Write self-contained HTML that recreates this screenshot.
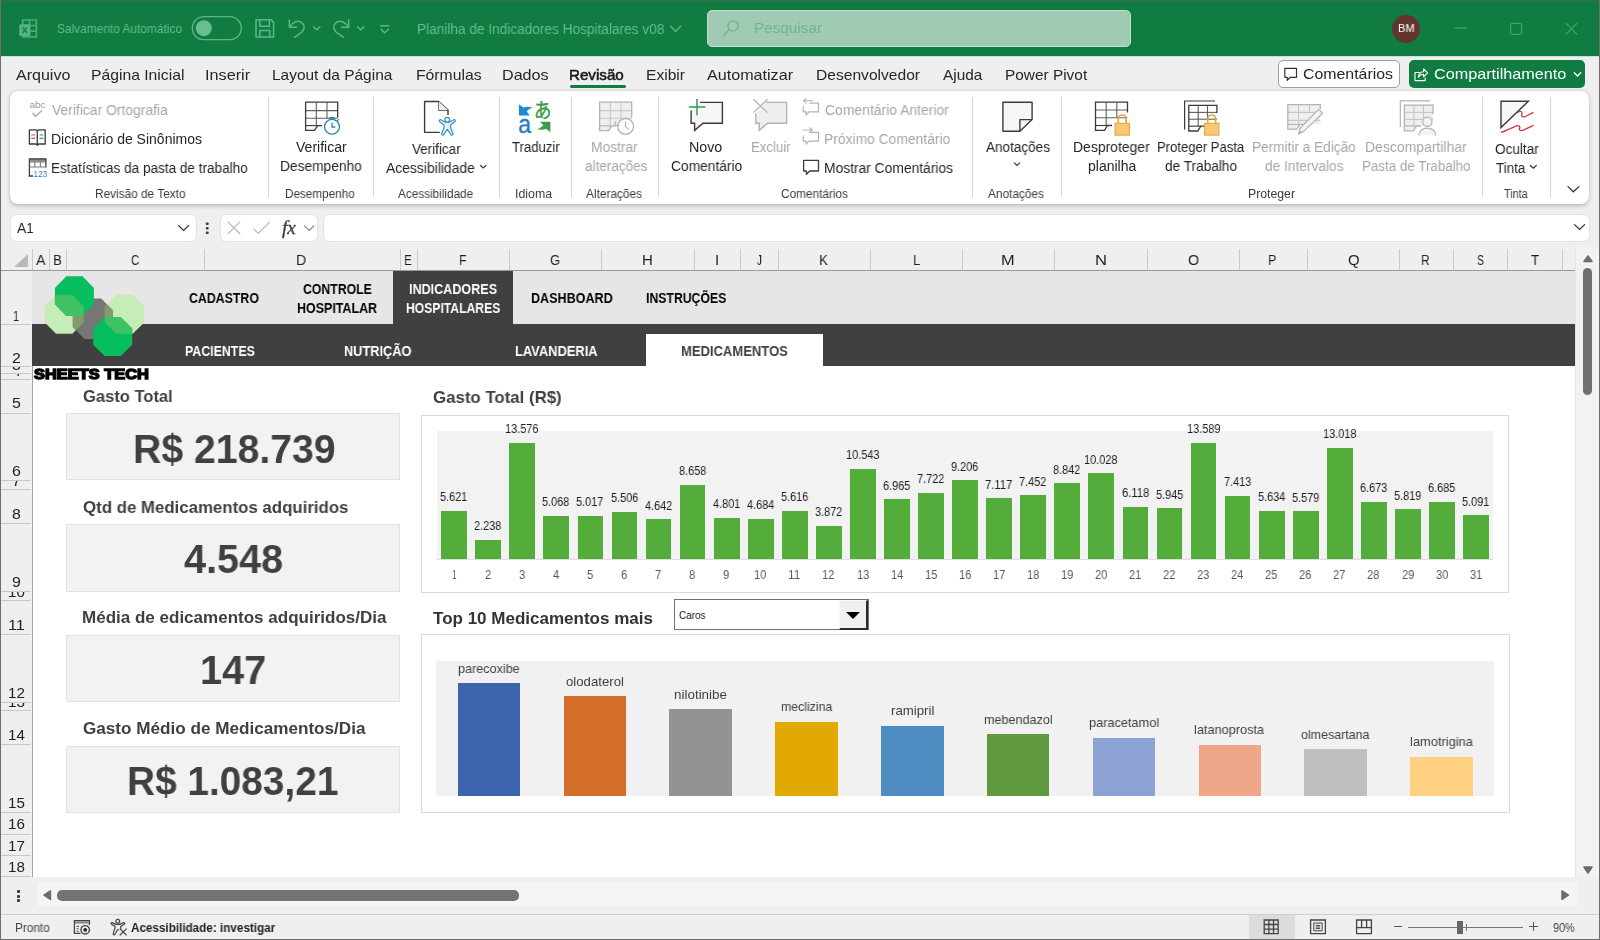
<!DOCTYPE html>
<html lang="pt-BR"><head><meta charset="utf-8"><title>Planilha de Indicadores Hospitalares v08</title>
<style>
html,body{margin:0;padding:0;}
body{width:1600px;height:940px;overflow:hidden;position:relative;background:#efefef;font-family:'Liberation Sans', 'DejaVu Sans', sans-serif;}
#app{position:absolute;left:0;top:0;width:1600px;height:940px;overflow:hidden;}
#app div{position:absolute;box-sizing:border-box;}
#app svg{position:absolute;overflow:visible;}
.t{position:absolute;white-space:nowrap;transform-origin:0 50%;display:block;will-change:transform;}
</style></head><body><div id="app">
<div style="left:0px;top:0px;width:1600px;height:56px;background:#107c41;"></div>
<div style="left:0px;top:0px;width:1600px;height:1px;background:#3b6b52;"></div>
<div style="left:707px;top:10px;width:424px;height:37px;background:#9fcbb4;border-radius:5px;border:1px solid #c0e2d0;"></div>
<div style="left:1391.5px;top:14.5px;width:28px;height:28px;background:#63352f;border-radius:50%;"></div>
<div style="left:0px;top:56px;width:1600px;height:36px;background:#efefef;"></div>
<div style="left:0px;top:55.5px;width:1600px;height:1.5px;background:#bfe6d0;"></div>
<div style="left:570px;top:85px;width:55.5px;height:3px;background:#107c41;border-radius:2px;"></div>
<div style="left:1278px;top:60px;width:122px;height:28px;background:#ffffff;border:1px solid #9e9e9e;border-radius:5px;"></div>
<div style="left:1409px;top:60px;width:176px;height:28px;background:#107c41;border-radius:5px;"></div>
<div style="left:10px;top:91px;width:1579px;height:113px;background:#ffffff;border-radius:8px;box-shadow:0 1.5px 4px rgba(0,0,0,.22),0 0 1px rgba(0,0,0,.15);"></div>
<div style="left:268.0px;top:97px;width:1px;height:100px;background:#d6d6d6;"></div>
<div style="left:373.0px;top:97px;width:1px;height:100px;background:#d6d6d6;"></div>
<div style="left:498.5px;top:97px;width:1px;height:100px;background:#d6d6d6;"></div>
<div style="left:570.5px;top:97px;width:1px;height:100px;background:#d6d6d6;"></div>
<div style="left:657.5px;top:97px;width:1px;height:100px;background:#d6d6d6;"></div>
<div style="left:972.0px;top:97px;width:1px;height:100px;background:#d6d6d6;"></div>
<div style="left:1060.5px;top:97px;width:1px;height:100px;background:#d6d6d6;"></div>
<div style="left:1482.0px;top:97px;width:1px;height:100px;background:#d6d6d6;"></div>
<div style="left:1550.0px;top:97px;width:1px;height:100px;background:#d6d6d6;"></div>
<div style="left:11px;top:215px;width:184.5px;height:25.5px;background:#ffffff;border-radius:5px;box-shadow:0 0 0 1px #e2e2e2;"></div>
<div style="left:220.5px;top:215px;width:96.5px;height:25.5px;background:#ffffff;border-radius:5px;box-shadow:0 0 0 1px #e2e2e2;"></div>
<div style="left:324px;top:215px;width:1264.5px;height:25.5px;background:#ffffff;border-radius:5px;box-shadow:0 0 0 1px #e2e2e2;"></div>
<div style="left:0px;top:247px;width:1575px;height:24px;background:#efefef;"></div>
<div style="left:0px;top:270px;width:1575px;height:1px;background:#9a9a9a;"></div>
<div style="left:49.0px;top:249px;width:1px;height:21px;background:#c9c9c9;"></div>
<div style="left:66.0px;top:249px;width:1px;height:21px;background:#c9c9c9;"></div>
<div style="left:203.5px;top:249px;width:1px;height:21px;background:#c9c9c9;"></div>
<div style="left:399.5px;top:249px;width:1px;height:21px;background:#c9c9c9;"></div>
<div style="left:416.5px;top:249px;width:1px;height:21px;background:#c9c9c9;"></div>
<div style="left:508.5px;top:249px;width:1px;height:21px;background:#c9c9c9;"></div>
<div style="left:600.5px;top:249px;width:1px;height:21px;background:#c9c9c9;"></div>
<div style="left:693.5px;top:249px;width:1px;height:21px;background:#c9c9c9;"></div>
<div style="left:739.5px;top:249px;width:1px;height:21px;background:#c9c9c9;"></div>
<div style="left:777.5px;top:249px;width:1px;height:21px;background:#c9c9c9;"></div>
<div style="left:870.0px;top:249px;width:1px;height:21px;background:#c9c9c9;"></div>
<div style="left:962.0px;top:249px;width:1px;height:21px;background:#c9c9c9;"></div>
<div style="left:1054.0px;top:249px;width:1px;height:21px;background:#c9c9c9;"></div>
<div style="left:1146.5px;top:249px;width:1px;height:21px;background:#c9c9c9;"></div>
<div style="left:1238.5px;top:249px;width:1px;height:21px;background:#c9c9c9;"></div>
<div style="left:1306.5px;top:249px;width:1px;height:21px;background:#c9c9c9;"></div>
<div style="left:1398.5px;top:249px;width:1px;height:21px;background:#c9c9c9;"></div>
<div style="left:1452.5px;top:249px;width:1px;height:21px;background:#c9c9c9;"></div>
<div style="left:1507.0px;top:249px;width:1px;height:21px;background:#c9c9c9;"></div>
<div style="left:1561.5px;top:249px;width:1px;height:21px;background:#c9c9c9;"></div>
<div style="left:31.5px;top:249px;width:1px;height:21px;background:#c9c9c9;"></div>
<svg style="left:14px;top:254px" width="15" height="14"><polygon points="14,0 14,13 0,13" fill="#b8b8b8"/></svg>
<div style="left:0px;top:271px;width:1575px;height:606px;background:#ffffff;"></div>
<div style="left:0px;top:271px;width:32px;height:606px;background:#efefef;"></div>
<div style="left:31.5px;top:271px;width:1px;height:606px;background:#a6a6a6;"></div>
<div style="left:0;top:271px;width:31px;height:606px;overflow:hidden;" id="rh">
<div style="left:0px;top:53.0px;width:31px;height:1px;background:#c9c9c9;"></div>
<div style="left:0px;top:94.5px;width:31px;height:1px;background:#c9c9c9;"></div>
<div style="left:0px;top:101.5px;width:31px;height:1px;background:#c9c9c9;"></div>
<div style="left:0px;top:108.0px;width:31px;height:1px;background:#c9c9c9;"></div>
<div style="left:0px;top:141.5px;width:31px;height:1px;background:#c9c9c9;"></div>
<div style="left:0px;top:209.0px;width:31px;height:1px;background:#c9c9c9;"></div>
<div style="left:0px;top:218.0px;width:31px;height:1px;background:#c9c9c9;"></div>
<div style="left:0px;top:251.5px;width:31px;height:1px;background:#c9c9c9;"></div>
<div style="left:0px;top:319.5px;width:31px;height:1px;background:#c9c9c9;"></div>
<div style="left:0px;top:328.5px;width:31px;height:1px;background:#c9c9c9;"></div>
<div style="left:0px;top:362.5px;width:31px;height:1px;background:#c9c9c9;"></div>
<div style="left:0px;top:430.5px;width:31px;height:1px;background:#c9c9c9;"></div>
<div style="left:0px;top:439.0px;width:31px;height:1px;background:#c9c9c9;"></div>
<div style="left:0px;top:473.0px;width:31px;height:1px;background:#c9c9c9;"></div>
<div style="left:0px;top:541.0px;width:31px;height:1px;background:#c9c9c9;"></div>
<div style="left:0px;top:562.5px;width:31px;height:1px;background:#c9c9c9;"></div>
<div style="left:0px;top:583.5px;width:31px;height:1px;background:#c9c9c9;"></div>
<div style="left:0px;top:604.5px;width:31px;height:1px;background:#c9c9c9;"></div>
</div>
<div style="left:32px;top:271px;width:1543px;height:53px;background:#e6e6e6;"></div>
<div style="left:32px;top:324.3px;width:1543px;height:41.5px;background:#404040;"></div>
<div style="left:393px;top:271px;width:120px;height:53.5px;background:#404040;"></div>
<div style="left:646px;top:334px;width:176.5px;height:31.8px;background:#ffffff;"></div>
<svg style="left:0;top:0" width="200" height="400"><defs><clipPath id="cg"><polygon points="84.6,298.6 101.2,298.6 113.0,310.4 113.0,327.1 101.2,338.9 84.6,338.9 72.8,327.1 72.8,310.4"/></clipPath><clipPath id="ct"><polygon points="66.3,276.3 82.5,276.3 93.9,287.9 93.9,304.3 82.5,315.9 66.3,315.9 54.9,304.3 54.9,287.9"/></clipPath><clipPath id="cb"><polygon points="104.6,317.2 120.8,317.2 132.2,328.6 132.2,344.7 120.8,356.1 104.6,356.1 93.2,344.7 93.2,328.6"/></clipPath></defs><polygon points="56.1,294.8 72.3,294.8 83.7,306.2 83.7,322.4 72.3,333.8 56.1,333.8 44.7,322.4 44.7,306.2" fill="#c6edb7"/><polygon points="116.3,294.8 132.7,294.8 144.3,306.2 144.3,322.4 132.7,333.8 116.3,333.8 104.7,322.4 104.7,306.2" fill="#c6edb7"/><polygon points="84.6,298.6 101.2,298.6 113.0,310.4 113.0,327.1 101.2,338.9 84.6,338.9 72.8,327.1 72.8,310.4" fill="#767676"/><g clip-path="url(#cg)"><polygon points="56.1,294.8 72.3,294.8 83.7,306.2 83.7,322.4 72.3,333.8 56.1,333.8 44.7,322.4 44.7,306.2" fill="#809b6d"/><polygon points="116.3,294.8 132.7,294.8 144.3,306.2 144.3,322.4 132.7,333.8 116.3,333.8 104.7,322.4 104.7,306.2" fill="#809b6d"/></g><polygon points="66.3,276.3 82.5,276.3 93.9,287.9 93.9,304.3 82.5,315.9 66.3,315.9 54.9,304.3 54.9,287.9" fill="#06bd60"/><polygon points="104.6,317.2 120.8,317.2 132.2,328.6 132.2,344.7 120.8,356.1 104.6,356.1 93.2,344.7 93.2,328.6" fill="#06bd60"/><g clip-path="url(#ct)"><polygon points="56.1,294.8 72.3,294.8 83.7,306.2 83.7,322.4 72.3,333.8 56.1,333.8 44.7,322.4 44.7,306.2" fill="#3fc263"/></g><g clip-path="url(#cb)"><polygon points="116.3,294.8 132.7,294.8 144.3,306.2 144.3,322.4 132.7,333.8 116.3,333.8 104.7,322.4 104.7,306.2" fill="#3fc263"/></g></svg>
<div style="left:66px;top:413.3px;width:334px;height:67.19999999999999px;background:#f2f2f2;border:1px solid #e2e2e2;"></div>
<div style="left:66px;top:524px;width:334px;height:67.5px;background:#f2f2f2;border:1px solid #e2e2e2;"></div>
<div style="left:66px;top:634.5px;width:334px;height:67.5px;background:#f2f2f2;border:1px solid #e2e2e2;"></div>
<div style="left:66px;top:745.5px;width:334px;height:67.0px;background:#f2f2f2;border:1px solid #e2e2e2;"></div>
<div style="left:421px;top:415px;width:1087.5px;height:177.5px;background:#ffffff;border:1px solid #d9d9d9;"></div>
<div style="left:437px;top:430.5px;width:1056px;height:128px;background:#f2f2f2;"></div>
<div style="left:437px;top:558.5px;width:1056px;height:1px;background:#dcdcdc;"></div>
<div style="left:441.25px;top:510.75px;width:25.75px;height:48.0px;background:#54ad3b;"></div>
<div style="left:475.25px;top:539.75px;width:25.75px;height:19.0px;background:#54ad3b;"></div>
<div style="left:509.25px;top:443.0px;width:25.75px;height:115.75px;background:#54ad3b;"></div>
<div style="left:543.25px;top:515.5px;width:25.75px;height:43.25px;background:#54ad3b;"></div>
<div style="left:577.5px;top:516.0px;width:25.75px;height:42.75px;background:#54ad3b;"></div>
<div style="left:611.5px;top:511.75px;width:25.75px;height:47.0px;background:#54ad3b;"></div>
<div style="left:645.5px;top:519.25px;width:25.75px;height:39.5px;background:#54ad3b;"></div>
<div style="left:679.5px;top:484.75px;width:25.75px;height:74.0px;background:#54ad3b;"></div>
<div style="left:713.75px;top:517.75px;width:25.75px;height:41.0px;background:#54ad3b;"></div>
<div style="left:747.75px;top:518.75px;width:25.75px;height:40.0px;background:#54ad3b;"></div>
<div style="left:781.75px;top:510.75px;width:25.75px;height:48.0px;background:#54ad3b;"></div>
<div style="left:815.75px;top:525.75px;width:25.75px;height:33.0px;background:#54ad3b;"></div>
<div style="left:850.0px;top:468.75px;width:25.75px;height:90.0px;background:#54ad3b;"></div>
<div style="left:884.0px;top:499.25px;width:25.75px;height:59.5px;background:#54ad3b;"></div>
<div style="left:918.0px;top:492.75px;width:25.75px;height:66.0px;background:#54ad3b;"></div>
<div style="left:952.0px;top:480.25px;width:25.75px;height:78.5px;background:#54ad3b;"></div>
<div style="left:986.25px;top:498.0px;width:25.75px;height:60.75px;background:#54ad3b;"></div>
<div style="left:1020.25px;top:495.25px;width:25.75px;height:63.5px;background:#54ad3b;"></div>
<div style="left:1054.25px;top:483.25px;width:25.75px;height:75.5px;background:#54ad3b;"></div>
<div style="left:1088.25px;top:473.25px;width:25.75px;height:85.5px;background:#54ad3b;"></div>
<div style="left:1122.5px;top:506.5px;width:25.75px;height:52.25px;background:#54ad3b;"></div>
<div style="left:1156.5px;top:508.0px;width:25.75px;height:50.75px;background:#54ad3b;"></div>
<div style="left:1190.5px;top:442.75px;width:25.75px;height:116.0px;background:#54ad3b;"></div>
<div style="left:1224.5px;top:495.5px;width:25.75px;height:63.25px;background:#54ad3b;"></div>
<div style="left:1258.75px;top:510.75px;width:25.75px;height:48.0px;background:#54ad3b;"></div>
<div style="left:1292.75px;top:511.25px;width:25.75px;height:47.5px;background:#54ad3b;"></div>
<div style="left:1326.75px;top:447.75px;width:25.75px;height:111.0px;background:#54ad3b;"></div>
<div style="left:1360.75px;top:501.75px;width:25.75px;height:57.0px;background:#54ad3b;"></div>
<div style="left:1395.0px;top:509.0px;width:25.75px;height:49.75px;background:#54ad3b;"></div>
<div style="left:1429.0px;top:501.75px;width:25.75px;height:57.0px;background:#54ad3b;"></div>
<div style="left:1463.0px;top:515.25px;width:25.75px;height:43.5px;background:#54ad3b;"></div>
<div style="left:673.5px;top:599px;width:195px;height:30.5px;background:#ffffff;border:1px solid #707070;"></div>
<div style="left:838.8px;top:600px;width:29.7px;height:29.5px;background:#f0f0f0;border-right:2px solid #2b2b2b;border-bottom:2px solid #2b2b2b;border-top:1px solid #fafafa;border-left:1px solid #fafafa;"></div>
<svg style="left:846px;top:612px" width="14" height="7"><polygon points="0,0 14,0 7,7" fill="#000"/></svg>
<div style="left:421px;top:634px;width:1088.5px;height:178.5px;background:#ffffff;border:1px solid #d9d9d9;"></div>
<div style="left:436px;top:661px;width:1058px;height:135px;background:#f1f1f1;"></div>
<div style="left:458px;top:683px;width:62px;height:113px;background:#3c64ad;"></div>
<div style="left:564px;top:696px;width:62px;height:100px;background:#d36e2a;"></div>
<div style="left:669px;top:709px;width:63px;height:87px;background:#939393;"></div>
<div style="left:775px;top:721.75px;width:63px;height:74.25px;background:#e2a902;"></div>
<div style="left:881.25px;top:725.5px;width:62.5px;height:70.5px;background:#4d8bc1;"></div>
<div style="left:987px;top:733.75px;width:61.75px;height:62.25px;background:#61993e;"></div>
<div style="left:1093px;top:737.5px;width:62px;height:58.5px;background:#8da2d4;"></div>
<div style="left:1199.25px;top:745px;width:61.5px;height:51px;background:#f0a789;"></div>
<div style="left:1304.25px;top:749.25px;width:62.75px;height:46.75px;background:#bfbfbf;"></div>
<div style="left:1410px;top:756.75px;width:63px;height:39.25px;background:#ffd080;"></div>
<div style="left:1575px;top:247px;width:25px;height:630px;background:#f2f2f2;"></div>
<div style="left:1575px;top:247px;width:1px;height:630px;background:#e4e4e4;"></div>
<div style="left:1583px;top:268.3px;width:9.3px;height:126.7px;background:#707070;border-radius:5px;"></div>
<svg style="left:1582.5px;top:254.6px" width="10" height="8"><polygon points="5,1 9,6.4 1,6.4" fill="#6c6c6c" stroke="#6c6c6c" stroke-width="1.6" stroke-linejoin="round"/></svg>
<svg style="left:1582.6px;top:865.6px" width="10" height="8"><polygon points="1,1 9,1 5,7" fill="#6c6c6c" stroke="#6c6c6c" stroke-width="1.6" stroke-linejoin="round"/></svg>
<div style="left:0px;top:877px;width:1600px;height:37px;background:#efefef;"></div>
<div style="left:37px;top:882px;width:1540px;height:24px;background:#f5f5f5;"></div>
<div style="left:57px;top:890px;width:462px;height:10.5px;background:#737373;border-radius:5px;"></div>
<svg style="left:43px;top:890.2px" width="8.4" height="10.4"><polygon points="7.4,1 7.4,9.4 1,5.2" fill="#6c6c6c" stroke="#6c6c6c" stroke-width="1.6" stroke-linejoin="round"/></svg>
<svg style="left:1561.4px;top:890.2px" width="8.4" height="10.4"><polygon points="1,1 7.4,5.2 1,9.4" fill="#6c6c6c" stroke="#6c6c6c" stroke-width="1.6" stroke-linejoin="round"/></svg>
<div style="left:17.4px;top:890.2px;width:2.9px;height:2.9px;background:#3a3a3a;border-radius:1px;"></div>
<div style="left:17.4px;top:894.7px;width:2.9px;height:2.9px;background:#3a3a3a;border-radius:1px;"></div>
<div style="left:17.4px;top:899.2px;width:2.9px;height:2.9px;background:#3a3a3a;border-radius:1px;"></div>
<div style="left:0px;top:914px;width:1600px;height:26px;background:#efefef;"></div>
<div style="left:0px;top:914px;width:1600px;height:1px;background:#cfcfcf;"></div>
<div style="left:1249px;top:915px;width:46px;height:24px;background:#dcdcdc;"></div>
<div style="left:1408px;top:927px;width:115px;height:1px;background:#767676;"></div>
<div style="left:1457px;top:920.5px;width:5.5px;height:13px;background:#666;"></div>
<div style="left:1465.5px;top:924px;width:1px;height:7px;background:#767676;"></div>
<div style="left:1393.5px;top:926px;width:8.5px;height:1.2px;background:#555;"></div>
<div style="left:1529px;top:926px;width:8.5px;height:1.2px;background:#555;"></div>
<div style="left:1532.7px;top:922px;width:1.2px;height:9px;background:#555;"></div>
<div style="left:0px;top:0px;width:1.2px;height:940px;background:#6c6f6d;"></div>
<div style="left:1599px;top:0px;width:1px;height:940px;background:#6c6f6d;"></div>
<div style="left:0px;top:938.8px;width:1600px;height:1.2px;background:#6c6f6d;"></div>
<svg style="left:0;top:0" width="1600" height="940" viewBox="0 0 1600 940"><path d="M22.7 20 H36.3 V36.8 H22.7 Z M29.5 20 V36.8 M22.7 25.6 H36.3 M22.7 31.2 H36.3" stroke="#4aa97a" fill="none" stroke-width="1.7" /><rect x="19.3" y="24.3" width="10.8" height="11.7" rx="1.5" fill="#55b484"/><path d="M22.6 27.3 L27 33 M27 27.3 L22.6 33" stroke="#107c41" fill="none" stroke-width="1.3" /><rect x="192.3" y="16.7" width="49" height="23" rx="11.5" fill="none" stroke="#5ab888" stroke-width="1.3"/><circle cx="203.8" cy="28.2" r="8" fill="#68bd92"/><path d="M256 19.8 H271 L273.6 22.4 V37 H256 Z M259.8 19.8 V26.3 H269.3 V19.8 M259.8 37 V30.5 H269.8 V37" stroke="#5ab888" fill="none" stroke-width="1.5" stroke-linejoin="round"/><path d="M289.3 20 V27.2 H296.5 M289.8 26.8 C293 21.5 298 20 301.5 22.3 C305 24.7 305 29 302 32 L294.5 37.3" stroke="#5ab888" fill="none" stroke-width="1.5" stroke-linecap="round" stroke-linejoin="round"/><path d="M313.6 26.7 L316.8 29.7 L320 26.7" stroke="#5ab888" fill="none" stroke-width="1.4" stroke-linecap="round"/><path d="M348.7 20 V27.2 H341.5 M348.2 26.8 C345 21.5 340 20 336.5 22.3 C333 24.7 333 29 336 32 L343.5 37.3" stroke="#5ab888" fill="none" stroke-width="1.5" stroke-linecap="round" stroke-linejoin="round"/><path d="M357.5 26.7 L360.7 29.7 L363.9 26.7" stroke="#5ab888" fill="none" stroke-width="1.4" stroke-linecap="round"/><path d="M380.6 25.7 H388.8 M380.9 29.2 L384.7 32.7 L388.5 29.2" stroke="#5ab888" fill="none" stroke-width="1.4" stroke-linecap="round"/><path d="M670.5 26.3 L675.6 31.3 L680.7 26.3" stroke="#5ab888" fill="none" stroke-width="1.3" stroke-linecap="round"/><circle cx="733" cy="25.9" r="5" fill="none" stroke="#6fb593" stroke-width="1.4"/><path d="M729.4 29.6 L723.3 35.8" stroke="#6fb593" fill="none" stroke-width="1.4" stroke-linecap="round"/><path d="M1454.5 28 H1467" stroke="#3fa46f" fill="none" stroke-width="1.2" /><rect x="1510.6" y="23.3" width="11" height="11" rx="1.8" fill="none" stroke="#3fa46f" stroke-width="1.2"/><path d="M1565.7 23 L1577.3 34.6 M1577.3 23 L1565.7 34.6" stroke="#3fa46f" fill="none" stroke-width="1.2" /><path d="M1284.8 68.3 H1296.5 V77.3 H1290.3 L1287.2 80.3 V77.3 H1284.8 Z" stroke="#333" fill="none" stroke-width="1.2" stroke-linejoin="round"/><path d="M1419.5 72.5 H1415 V80.6 H1425.2 V77.5 M1418.3 77.3 C1418.8 73.5 1421 71.8 1423.6 71.8 V69 L1427.6 72.9 L1423.6 76.8 V74.2 C1421.5 74.2 1419.8 75 1418.3 77.3 Z" stroke="#fff" fill="none" stroke-width="1.1" stroke-linejoin="round"/><path d="M1574.3 72.8 L1577.5 76 L1580.7 72.8" stroke="#fff" fill="none" stroke-width="1.3" stroke-linecap="round"/><text x="29.6" y="108" font-family="Liberation Sans, sans-serif" font-size="9.5" fill="#9a9a9a" textLength="16" lengthAdjust="spacingAndGlyphs">abc</text><path d="M32.6 113 L35.6 116.4 L41.8 110.6" stroke="#9a9a9a" fill="none" stroke-width="1.2" /><path d="M29.4 129.8 H36 L37.3 131 L38.6 129.8 H45.2 V144 H38.6 L37.3 145.2 L36 144 H29.4 Z M37.3 131 V145" stroke="#3b3b3b" fill="#fafafa" stroke-width="1.3" stroke-linejoin="round"/><path d="M31.3 135 H35 M31.3 138.3 H35" stroke="#d9456b" fill="none" stroke-width="1.2" /><path d="M39.6 135 H43.3 M39.6 138.3 H43.3" stroke="#5b8a5b" fill="none" stroke-width="1.2" /><rect x="29.4" y="158.8" width="16.8" height="3" fill="#8a8a8a"/><path d="M45.9 167.5 V158.8 H29.4 V176 H33" stroke="#3b3b3b" fill="none" stroke-width="1.3" /><path d="M29.4 162 H45.9 M29.4 167 H45.9 M34.8 162 V167 M40.4 162 V167" stroke="#7a7a7a" fill="none" stroke-width="1.1" /><text x="33.3" y="176.8" font-family="Liberation Sans, sans-serif" font-size="9.5" fill="#2f8fc4" textLength="13.8" lengthAdjust="spacingAndGlyphs">123</text><path d="M316.3 102.2 V125.6" stroke="#5e5e5e" fill="none" stroke-width="1.1" /><path d="M327.0 102.2 V118.2" stroke="#5e5e5e" fill="none" stroke-width="1.1" /><path d="M305.6 110.6 H337.7" stroke="#5e5e5e" fill="none" stroke-width="1.1" /><path d="M305.6 118.2 H337.7" stroke="#5e5e5e" fill="none" stroke-width="1.1" /><path d="M337.7 117.5 V102.2 H305.6 V130.4 H314.6 L317.6 125.60000000000001 H322.1" stroke="#3b3b3b" fill="none" stroke-width="1.3" /><path d="M305.6 125.60000000000001 H317.6" stroke="#3b3b3b" fill="none" stroke-width="1.1" /><circle cx="332" cy="126.7" r="7.4" fill="#fff" stroke="#2b86a8" stroke-width="1.3"/><path d="M329.3 117.6 H334.7 M332 117.6 V119.3 M337.4 120.8 L338.9 119.3 M332 122.8 V127 H335.3" stroke="#2b86a8" fill="none" stroke-width="1.3" /><path d="M439.8 132.4 H424.6 V101.5 H438.7 L448 110 V115 M438.7 101.5 V110 H448" stroke="#3b3b3b" fill="none" stroke-width="1.4" stroke-linejoin="round"/><path d="M438.7 101.5 V110 H448 Z" stroke="none" fill="#f0f0f0" stroke-width="0" /><path d="M440.9 119.8 L445.4 122.2 H449.2 L453.7 119.8 C454.9 119.3 455.9 120.9 454.9 121.8 L450.5 125.1 L450.8 128.3 L453 133.4 C453.5 134.8 451.5 135.7 450.8 134.4 L447.3 129.4 L443.8 134.4 C443.1 135.7 441.1 134.8 441.6 133.4 L443.8 128.3 L444.1 125.1 L439.7 121.8 C438.7 120.9 439.7 119.3 440.9 119.8 Z" stroke="#3a8fb7" fill="#e4f5fb" stroke-width="1.2" stroke-linejoin="round"/><circle cx="447.2" cy="119.8" r="2.4" fill="#f4fbfe" stroke="#3a8fb7" stroke-width="1.2"/><path d="M480.5 165.5 L483.2 168 L485.9 165.5" stroke="#3b3b3b" fill="none" stroke-width="1.2" stroke-linecap="round"/><path d="M518.9 104.3 L523.4 107.6 C526 106.4 529 106.4 532.6 107.4 C529.5 108.5 527.5 110 526.7 111.6 L529.9 115.4 H518.9 Z" stroke="none" fill="#1f8ad0" stroke-width="0" /><path d="M550.4 132.2 L546 128.8 C543.4 130 540.4 130 537.2 129.3 C540.3 128 542.3 126.6 543.2 125 L539.9 121.7 H550.4 Z" stroke="none" fill="#3d9b48" stroke-width="0" /><text x="518.3" y="132.6" font-family="Liberation Sans, sans-serif" font-size="26" fill="#1f80c0" stroke="#1f80c0" stroke-width="0.4" textLength="12.8" lengthAdjust="spacingAndGlyphs">a</text><text x="534" y="117.6" font-family="Liberation Sans, Noto Sans CJK JP, sans-serif" font-size="20" fill="#3c9a4a" stroke="#3c9a4a" stroke-width="0.5" textLength="17.4" lengthAdjust="spacingAndGlyphs">あ</text><path d="M599.6 102.2 H631.7 V125.8 H611.6 L608.6 130.6 H599.6 Z" fill="#efefef"/><path d="M610.3 102.2 V125.8" stroke="#c6c6c6" fill="none" stroke-width="1.1" /><path d="M621.0 102.2 V118.2" stroke="#c6c6c6" fill="none" stroke-width="1.1" /><path d="M599.6 110.6 H631.7" stroke="#c6c6c6" fill="none" stroke-width="1.1" /><path d="M599.6 118.2 H631.7" stroke="#c6c6c6" fill="none" stroke-width="1.1" /><path d="M631.7 117.5 V102.2 H599.6 V130.6 H608.6 L611.6 125.8 H616.1" stroke="#b3b3b3" fill="none" stroke-width="1.3" /><path d="M599.6 125.8 H611.6" stroke="#b3b3b3" fill="none" stroke-width="1.1" /><circle cx="625.6" cy="126.4" r="7.9" fill="#fff" stroke="#b3b3b3" stroke-width="1.3"/><path d="M625.6 121.5 V126.6 L628.6 129.6 M615.2 121.3 V125.3 H619.2" stroke="#b3b3b3" fill="none" stroke-width="1.2" /><path d="M700 102.4 H722.4 V123.2 H703 L694.6 130.4 V123.2 H691.1 V110.6" stroke="#3b3b3b" fill="#f6f6f6" stroke-width="1.4" stroke-linejoin="miter"/><path d="M697 98.9 V115.2 M688.8 107.1 H705.4" stroke="#2a9d57" fill="none" stroke-width="1.5" /><path d="M766 102.4 H786.6 V123.2 H767.5 L759.2 130.4 V123.2 H755.8 V113.5" stroke="#b3b3b3" fill="#efefef" stroke-width="1.4" /><path d="M753.5 99.3 L767.5 112.6 M767.5 99.3 L753.5 112.6" stroke="#b3b3b3" fill="none" stroke-width="1.3" /><path d="M809.3 103.19999999999999 H818.5 V111.89999999999999 H809.0999999999999 L806.0999999999999 114.8 V111.89999999999999 H803.3 V106.19999999999999" stroke="#b3b3b3" fill="none" stroke-width="1.2" /><path d="M813.0999999999999 100.8 H803.5999999999999 M806.3 98.19999999999999 L803.5999999999999 100.8 L806.3 103.39999999999999" stroke="#b3b3b3" fill="none" stroke-width="1.1" /><path d="M809.3 132.4 H818.5 V141.10000000000002 H809.0999999999999 L806.0999999999999 144.0 V141.10000000000002 H803.3 V135.4" stroke="#b3b3b3" fill="none" stroke-width="1.2" /><path d="M802.8 130.0 H812.3 M809.5999999999999 127.4 L812.3 130.0 L809.5999999999999 132.60000000000002" stroke="#b3b3b3" fill="none" stroke-width="1.1" /><path d="M803.6 160.4 H818.5 V171 H809.6 L806.4 174.2 V171 H803.6 Z" stroke="#3b3b3b" fill="none" stroke-width="1.3" stroke-linejoin="round"/><path d="M1002.9 102.3 H1032.1 V119.6 L1019.9 131.3 H1002.9 Z" stroke="#3b3b3b" fill="#f6f6f6" stroke-width="1.4" stroke-linejoin="round"/><path d="M1019.9 131.3 V119.6 H1032.1" stroke="#3b3b3b" fill="none" stroke-width="1.4" stroke-linejoin="round"/><path d="M1014.3 162.9 L1017 165.5 L1019.7 162.9" stroke="#3b3b3b" fill="none" stroke-width="1.2" stroke-linecap="round"/><path d="M1106.2 102.2 V125.5" stroke="#5e5e5e" fill="none" stroke-width="1.1" /><path d="M1116.8 102.2 V117.8" stroke="#5e5e5e" fill="none" stroke-width="1.1" /><path d="M1095.5 110.0 H1127.5" stroke="#5e5e5e" fill="none" stroke-width="1.1" /><path d="M1095.5 117.8 H1127.5" stroke="#5e5e5e" fill="none" stroke-width="1.1" /><path d="M1127.5 112.5 V102.2 H1095.5 V130.3 H1104.5 L1107.5 125.50000000000001 H1112.0" stroke="#3b3b3b" fill="none" stroke-width="1.3" /><path d="M1095.5 125.50000000000001 H1107.5" stroke="#3b3b3b" fill="none" stroke-width="1.1" /><path d="M1118.3 123.3 V119.1 C1118.3 113.7 1126.1 113.7 1126.1 119.1 V123.3" stroke="#e9a440" fill="none" stroke-width="1.6" /><rect x="1115" y="123.3" width="14.4" height="11.8" fill="#f9c874" stroke="#e9a440" stroke-width="1.1"/><path d="M1215 101 H1184.6 V129.5" stroke="#3b3b3b" fill="none" stroke-width="1.2" /><path d="M1198.2 105.3 V126.2" stroke="#5e5e5e" fill="none" stroke-width="1.1" /><path d="M1207.5 105.3 V119.2" stroke="#5e5e5e" fill="none" stroke-width="1.1" /><path d="M1188.8 112.4 H1216.9" stroke="#5e5e5e" fill="none" stroke-width="1.1" /><path d="M1188.8 119.2 H1216.9" stroke="#5e5e5e" fill="none" stroke-width="1.1" /><path d="M1216.9 113.0 V105.3 H1188.8 V131 H1197.8 L1200.8 126.2 H1205.3" stroke="#3b3b3b" fill="none" stroke-width="1.3" /><path d="M1188.8 126.2 H1200.8" stroke="#3b3b3b" fill="none" stroke-width="1.1" /><path d="M1207.8 123.3 V119.1 C1207.8 113.7 1215.6 113.7 1215.6 119.1 V123.3" stroke="#e9a440" fill="none" stroke-width="1.6" /><rect x="1204.5" y="123.3" width="14.4" height="11.8" fill="#f9c874" stroke="#e9a440" stroke-width="1.1"/><path d="M1287.8 104.6 H1320.3 V124.39999999999999 H1299.8 L1296.8 129.2 H1287.8 Z" fill="#efefef"/><path d="M1298.6 104.6 V124.4" stroke="#c6c6c6" fill="none" stroke-width="1.1" /><path d="M1309.5 104.6 V112.4" stroke="#c6c6c6" fill="none" stroke-width="1.1" /><path d="M1287.8 112.4 H1320.3" stroke="#c6c6c6" fill="none" stroke-width="1.1" /><path d="M1287.8 120.4 H1320.3" stroke="#c6c6c6" fill="none" stroke-width="1.1" /><path d="M1320.3 109.0 V104.6 H1287.8 V129.2 H1296.8 L1299.8 124.39999999999999 H1304.3" stroke="#b3b3b3" fill="none" stroke-width="1.3" /><path d="M1287.8 124.39999999999999 H1299.8" stroke="#b3b3b3" fill="none" stroke-width="1.1" /><path d="M1318.6 109.4 L1322.6 113.2 L1303.6 131.4 L1298.6 134 L1300.2 128 Z" stroke="#b3b3b3" fill="#f4f4f4" stroke-width="1.2" stroke-linejoin="round"/><path d="M1298.6 134 L1302 132.6 L1299.8 130.3 Z" stroke="none" fill="#b3b3b3" stroke-width="0" /><path d="M1430.2 100.8 H1400.3 V127" stroke="#b3b3b3" fill="none" stroke-width="1.2" /><path d="M1404.4 105.2 H1433 V126.00000000000001 H1416.4 L1413.4 130.8 H1404.4 Z" fill="#efefef"/><path d="M1413.9 105.2 V126.0" stroke="#c6c6c6" fill="none" stroke-width="1.1" /><path d="M1423.5 105.2 V119.4" stroke="#c6c6c6" fill="none" stroke-width="1.1" /><path d="M1404.4 112.4 H1433" stroke="#c6c6c6" fill="none" stroke-width="1.1" /><path d="M1404.4 119.4 H1433" stroke="#c6c6c6" fill="none" stroke-width="1.1" /><path d="M1433 114.0 V105.2 H1404.4 V130.8 H1413.4 L1416.4 126.00000000000001 H1420.9" stroke="#b3b3b3" fill="none" stroke-width="1.3" /><path d="M1404.4 126.00000000000001 H1416.4" stroke="#b3b3b3" fill="none" stroke-width="1.1" /><circle cx="1427.3" cy="121.8" r="4.6" fill="#f3f3f3" stroke="#b3b3b3" stroke-width="1.2"/><path d="M1418.8 135.6 C1418.8 125.6 1435.8 125.6 1435.8 135.6" stroke="#b3b3b3" fill="#f3f3f3" stroke-width="1.2" /><path d="M1501 101.2 H1528.4 L1501 127.6 Z" stroke="#3b3b3b" fill="#f6f6f6" stroke-width="1.4" stroke-linejoin="miter"/><path d="M1517.6 112.6 C1520.4 110.4 1522.6 111.4 1521.8 114 C1521 116.8 1523.4 117.6 1526 116.2 L1533 112.6" stroke="#d5383f" fill="none" stroke-width="1.3" stroke-linecap="round"/><path d="M1501.4 132.4 C1507 130.4 1512 128 1515.4 126.4 C1518.6 124.9 1520.4 126 1519.6 128.2 C1518.8 130.6 1521 131.2 1524 129.8 L1533 125.6" stroke="#d5383f" fill="none" stroke-width="1.3" stroke-linecap="round"/><path d="M1530.3 165.5 L1533.3 168.3 L1536.3 165.5" stroke="#3b3b3b" fill="none" stroke-width="1.2" stroke-linecap="round"/><path d="M1568 186.6 L1573.4 191.8 L1578.8 186.6" stroke="#333" fill="none" stroke-width="1.3" stroke-linecap="round"/><path d="M178.6 225.6 L183.6 230.4 L188.6 225.6" stroke="#333" fill="none" stroke-width="1.3" stroke-linecap="round"/><rect x="205.9" y="222.39999999999998" width="2.7" height="2.7" rx="0.8" fill="#3a3a3a"/><rect x="205.9" y="226.89999999999998" width="2.7" height="2.7" rx="0.8" fill="#3a3a3a"/><rect x="205.9" y="231.39999999999998" width="2.7" height="2.7" rx="0.8" fill="#3a3a3a"/><path d="M227.8 221.6 L240.2 234 M240.2 221.6 L227.8 234" stroke="#b8b8b8" fill="none" stroke-width="1.2" /><path d="M253.4 228.6 L258.4 233.4 L269.8 221.8" stroke="#b8b8b8" fill="none" stroke-width="1.2" /><path d="M304.6 226 L309.2 230.4 L313.8 226" stroke="#8a8a8a" fill="none" stroke-width="1.2" stroke-linecap="round"/><path d="M1574.6 224.6 L1579.6 229.4 L1584.6 224.6" stroke="#333" fill="none" stroke-width="1.3" stroke-linecap="round"/><path d="M89.4 925 V920.6 H74.4 V933.4 H80.5" stroke="#444" fill="none" stroke-width="1.3" /><rect x="75" y="921.2" width="13.8" height="2.4" fill="#8a8a8a"/><path d="M76.6 926.4 H79 M76.6 928.8 H78.6 M76.6 931.2 H78.6" stroke="#444" fill="none" stroke-width="1" /><circle cx="85.2" cy="929.8" r="4.2" fill="#efefef" stroke="#444" stroke-width="1.4"/><circle cx="85.2" cy="929.8" r="1.9" fill="#222"/><circle cx="117.8" cy="921.3" r="1.9" fill="none" stroke="#444" stroke-width="1.2"/><path d="M112.2 922.6 L116 924.4 H119.8 L123.6 922.6 C124.6 922.3 125.2 923.6 124.3 924.2 L120.6 926.6 L120.9 928.4 M118.5 929.8 H117.5 L114.9 934.5 C114.4 935.4 113 934.9 113.2 933.9 L115.2 926.6 L111.5 924.2 C110.6 923.6 111.2 922.3 112.2 922.6" stroke="#444" fill="none" stroke-width="1.2" stroke-linejoin="round" stroke-linecap="round"/><path d="M119.8 928.6 L126.6 935.2 M126.6 928.6 L119.8 935.2" stroke="#444" fill="none" stroke-width="1.2" /><path d="M1264.2 920 H1278.2 V933.6 H1264.2 Z M1268.9 920 V933.6 M1273.5 920 V933.6 M1264.2 924.5 H1278.2 M1264.2 929.1 H1278.2" stroke="#444" fill="none" stroke-width="1.3" /><path d="M1310.6 920 H1325.4 V933.6 H1310.6 Z" stroke="#444" fill="none" stroke-width="1.3" /><path d="M1313.8 923 H1322.2 V930.8 H1313.8 Z M1315.8 925.4 H1320.2 M1315.8 927 H1320.2 M1315.8 928.6 H1320.2" stroke="#444" fill="none" stroke-width="1" /><path d="M1356.6 920 H1371.4 V933.6 H1356.6 Z M1361.6 920 V927.6 H1366.6 V920 M1356.6 927.6 H1371.4" stroke="#444" fill="none" stroke-width="1.3" /></svg>
<span class="t" style="left:57.00px;top:21.14px;font-size:12px;line-height:16px;color:#62bd8f;font-weight:400;transform:scaleX(0.9917);">Salvamento Automático</span>
<span class="t" style="left:416.53px;top:20.16px;font-size:14px;line-height:18px;color:#62bd8f;font-weight:400;transform:scaleX(0.9746);">Planilha de Indicadores Hospitalares v08</span>
<span class="t" style="left:753.98px;top:17.57px;font-size:15px;line-height:20px;color:#6fb593;font-weight:400;transform:scaleX(1.0197);">Pesquisar</span>
<span class="t" style="left:1397.50px;top:21.13px;font-size:11.5px;line-height:15px;color:#ffffff;font-weight:400;transform:scaleX(0.9598);">BM</span>
<span class="t" style="left:16.00px;top:64.67px;font-size:15px;line-height:20px;color:#262626;font-weight:400;transform:scaleX(1.0689);">Arquivo</span>
<span class="t" style="left:90.95px;top:64.67px;font-size:15px;line-height:20px;color:#262626;font-weight:400;transform:scaleX(1.0467);">Página Inicial</span>
<span class="t" style="left:204.92px;top:64.67px;font-size:15px;line-height:20px;color:#262626;font-weight:400;transform:scaleX(1.0816);">Inserir</span>
<span class="t" style="left:271.97px;top:64.67px;font-size:15px;line-height:20px;color:#262626;font-weight:400;transform:scaleX(1.0307);">Layout da Página</span>
<span class="t" style="left:415.95px;top:64.67px;font-size:15px;line-height:20px;color:#262626;font-weight:400;transform:scaleX(1.0490);">Fórmulas</span>
<span class="t" style="left:501.92px;top:64.67px;font-size:15px;line-height:20px;color:#262626;font-weight:400;transform:scaleX(1.0750);">Dados</span>
<span class="t" style="left:645.96px;top:64.67px;font-size:15px;line-height:20px;color:#262626;font-weight:400;transform:scaleX(1.0407);">Exibir</span>
<span class="t" style="left:707.00px;top:64.67px;font-size:15px;line-height:20px;color:#262626;font-weight:400;transform:scaleX(1.0745);">Automatizar</span>
<span class="t" style="left:815.96px;top:64.67px;font-size:15px;line-height:20px;color:#262626;font-weight:400;transform:scaleX(1.0398);">Desenvolvedor</span>
<span class="t" style="left:943.00px;top:64.67px;font-size:15px;line-height:20px;color:#262626;font-weight:400;transform:scaleX(1.0251);">Ajuda</span>
<span class="t" style="left:1004.97px;top:64.67px;font-size:15px;line-height:20px;color:#262626;font-weight:400;transform:scaleX(1.0267);">Power Pivot</span>
<span class="t" style="left:569.29px;top:64.67px;font-size:15px;line-height:20px;color:#1a1a1a;font-weight:400;transform:scaleX(1.0104);-webkit-text-stroke:0.55px #1a1a1a;">Revisão</span>
<span class="t" style="left:1302.50px;top:63.67px;font-size:15px;line-height:20px;color:#262626;font-weight:400;transform:scaleX(1.0587);">Comentários</span>
<span class="t" style="left:1433.50px;top:63.67px;font-size:15px;line-height:20px;color:#ffffff;font-weight:400;transform:scaleX(1.0801);">Compartilhamento</span>
<span class="t" style="left:52.00px;top:100.66px;font-size:14px;line-height:18px;color:#a6a6a6;font-weight:400;transform:scaleX(0.9921);">Verificar Ortografia</span>
<span class="t" style="left:51.00px;top:129.66px;font-size:14px;line-height:18px;color:#262626;font-weight:400;transform:scaleX(1.0002);">Dicionário de Sinônimos</span>
<span class="t" style="left:51.03px;top:159.16px;font-size:14px;line-height:18px;color:#262626;font-weight:400;transform:scaleX(0.9687);">Estatísticas da pasta de trabalho</span>
<span class="t" style="left:825.00px;top:100.66px;font-size:14px;line-height:18px;color:#a6a6a6;font-weight:400;transform:scaleX(0.9951);">Comentário Anterior</span>
<span class="t" style="left:824.01px;top:129.66px;font-size:14px;line-height:18px;color:#a6a6a6;font-weight:400;transform:scaleX(0.9896);">Próximo Comentário</span>
<span class="t" style="left:824.01px;top:159.16px;font-size:14px;line-height:18px;color:#262626;font-weight:400;transform:scaleX(0.9869);">Mostrar Comentários</span>
<span class="t" style="left:296.00px;top:138.16px;font-size:14px;line-height:18px;color:#262626;font-weight:400;transform:scaleX(1.0018);">Verificar</span>
<span class="t" style="left:280.02px;top:157.16px;font-size:14px;line-height:18px;color:#262626;font-weight:400;transform:scaleX(0.9819);">Desempenho</span>
<span class="t" style="left:412.00px;top:139.66px;font-size:14px;line-height:18px;color:#262626;font-weight:400;transform:scaleX(0.9625);">Verificar</span>
<span class="t" style="left:386.00px;top:158.66px;font-size:14px;line-height:18px;color:#262626;font-weight:400;transform:scaleX(0.9921);">Acessibilidade</span>
<span class="t" style="left:512.00px;top:138.16px;font-size:14px;line-height:18px;color:#262626;font-weight:400;transform:scaleX(0.9382);">Traduzir</span>
<span class="t" style="left:591.02px;top:138.16px;font-size:14px;line-height:18px;color:#a6a6a6;font-weight:400;transform:scaleX(0.9832);">Mostrar</span>
<span class="t" style="left:584.50px;top:157.16px;font-size:14px;line-height:18px;color:#a6a6a6;font-weight:400;transform:scaleX(0.9676);">alterações</span>
<span class="t" style="left:689.48px;top:138.16px;font-size:14px;line-height:18px;color:#262626;font-weight:400;transform:scaleX(1.0189);">Novo</span>
<span class="t" style="left:671.00px;top:156.66px;font-size:14px;line-height:18px;color:#262626;font-weight:400;transform:scaleX(0.9851);">Comentário</span>
<span class="t" style="left:751.06px;top:138.16px;font-size:14px;line-height:18px;color:#a6a6a6;font-weight:400;transform:scaleX(0.9433);">Excluir</span>
<span class="t" style="left:985.50px;top:138.16px;font-size:14px;line-height:18px;color:#262626;font-weight:400;transform:scaleX(0.9674);">Anotações</span>
<span class="t" style="left:1073.00px;top:138.16px;font-size:14px;line-height:18px;color:#262626;font-weight:400;transform:scaleX(0.9950);">Desproteger</span>
<span class="t" style="left:1087.50px;top:156.66px;font-size:14px;line-height:18px;color:#262626;font-weight:400;transform:scaleX(1.0005);">planilha</span>
<span class="t" style="left:1157.07px;top:138.16px;font-size:14px;line-height:18px;color:#262626;font-weight:400;transform:scaleX(0.9341);">Proteger Pasta</span>
<span class="t" style="left:1165.00px;top:156.66px;font-size:14px;line-height:18px;color:#262626;font-weight:400;transform:scaleX(0.9743);">de Trabalho</span>
<span class="t" style="left:1251.53px;top:138.16px;font-size:14px;line-height:18px;color:#a6a6a6;font-weight:400;transform:scaleX(0.9735);">Permitir a Edição</span>
<span class="t" style="left:1264.50px;top:156.66px;font-size:14px;line-height:18px;color:#a6a6a6;font-weight:400;transform:scaleX(0.9793);">de Intervalos</span>
<span class="t" style="left:1365.00px;top:138.16px;font-size:14px;line-height:18px;color:#a6a6a6;font-weight:400;transform:scaleX(0.9974);">Descompartilhar</span>
<span class="t" style="left:1362.05px;top:156.66px;font-size:14px;line-height:18px;color:#a6a6a6;font-weight:400;transform:scaleX(0.9549);">Pasta de Trabalho</span>
<span class="t" style="left:1495.00px;top:140.16px;font-size:14px;line-height:18px;color:#262626;font-weight:400;transform:scaleX(0.9678);">Ocultar</span>
<span class="t" style="left:1495.50px;top:158.66px;font-size:14px;line-height:18px;color:#262626;font-weight:400;transform:scaleX(0.9572);">Tinta</span>
<span class="t" style="left:95.00px;top:186.14px;font-size:12px;line-height:16px;color:#3b3b3b;font-weight:400;transform:scaleX(0.9851);">Revisão de Texto</span>
<span class="t" style="left:285.00px;top:186.14px;font-size:12px;line-height:16px;color:#3b3b3b;font-weight:400;transform:scaleX(0.9762);">Desempenho</span>
<span class="t" style="left:397.50px;top:186.14px;font-size:12px;line-height:16px;color:#3b3b3b;font-weight:400;transform:scaleX(0.9800);">Acessibilidade</span>
<span class="t" style="left:514.97px;top:186.14px;font-size:12px;line-height:16px;color:#3b3b3b;font-weight:400;transform:scaleX(1.0327);">Idioma</span>
<span class="t" style="left:586.00px;top:186.14px;font-size:12px;line-height:16px;color:#3b3b3b;font-weight:400;transform:scaleX(0.9877);">Alterações</span>
<span class="t" style="left:781.00px;top:186.14px;font-size:12px;line-height:16px;color:#3b3b3b;font-weight:400;transform:scaleX(0.9849);">Comentários</span>
<span class="t" style="left:988.00px;top:186.14px;font-size:12px;line-height:16px;color:#3b3b3b;font-weight:400;transform:scaleX(0.9875);">Anotações</span>
<span class="t" style="left:1248.00px;top:186.14px;font-size:12px;line-height:16px;color:#3b3b3b;font-weight:400;transform:scaleX(1.0211);">Proteger</span>
<span class="t" style="left:1504.00px;top:186.14px;font-size:12px;line-height:16px;color:#3b3b3b;font-weight:400;transform:scaleX(0.9037);">Tinta</span>
<span class="t" style="left:17.00px;top:219.16px;font-size:14px;line-height:18px;color:#262626;font-weight:400;transform:scaleX(0.9805);">A1</span>
<span class="t" style="left:282.00px;top:216.71px;font-size:18px;line-height:23px;color:#3a3a3a;font-weight:400;transform:scaleX(1.0671);font-family:'Liberation Serif', 'DejaVu Serif', serif;font-style:italic;-webkit-text-stroke:0.3px #3a3a3a;">fx</span>
<span class="t" style="left:36.00px;top:250.17px;font-size:15px;line-height:20px;color:#1f1f1f;font-weight:400;transform:scaleX(0.9500);">A</span>
<span class="t" style="left:53.11px;top:250.17px;font-size:15px;line-height:20px;color:#1f1f1f;font-weight:400;transform:scaleX(0.8889);">B</span>
<span class="t" style="left:131.00px;top:250.17px;font-size:15px;line-height:20px;color:#1f1f1f;font-weight:400;transform:scaleX(0.7727);">C</span>
<span class="t" style="left:296.30px;top:250.17px;font-size:15px;line-height:20px;color:#1f1f1f;font-weight:400;transform:scaleX(0.9500);">D</span>
<span class="t" style="left:404.22px;top:250.17px;font-size:15px;line-height:20px;color:#1f1f1f;font-weight:400;transform:scaleX(0.7778);">E</span>
<span class="t" style="left:458.94px;top:250.17px;font-size:15px;line-height:20px;color:#1f1f1f;font-weight:400;transform:scaleX(0.8125);">F</span>
<span class="t" style="left:550.25px;top:250.17px;font-size:15px;line-height:20px;color:#1f1f1f;font-weight:400;transform:scaleX(0.8636);">G</span>
<span class="t" style="left:642.00px;top:250.17px;font-size:15px;line-height:20px;color:#1f1f1f;font-weight:400;transform:scaleX(1.0000);">H</span>
<span class="t" style="left:715.00px;top:250.17px;font-size:15px;line-height:20px;color:#1f1f1f;font-weight:400;transform:scaleX(1.0000);">I</span>
<span class="t" style="left:756.75px;top:250.17px;font-size:15px;line-height:20px;color:#1f1f1f;font-weight:400;transform:scaleX(0.6429);">J</span>
<span class="t" style="left:819.36px;top:250.17px;font-size:15px;line-height:20px;color:#1f1f1f;font-weight:400;transform:scaleX(0.8889);">K</span>
<span class="t" style="left:912.64px;top:250.17px;font-size:15px;line-height:20px;color:#1f1f1f;font-weight:400;transform:scaleX(0.8571);">L</span>
<span class="t" style="left:1001.41px;top:250.17px;font-size:15px;line-height:20px;color:#1f1f1f;font-weight:400;transform:scaleX(1.0909);">M</span>
<span class="t" style="left:1094.64px;top:250.17px;font-size:15px;line-height:20px;color:#1f1f1f;font-weight:400;transform:scaleX(1.1111);">N</span>
<span class="t" style="left:1187.75px;top:250.17px;font-size:15px;line-height:20px;color:#1f1f1f;font-weight:400;transform:scaleX(0.9545);">O</span>
<span class="t" style="left:1268.42px;top:250.17px;font-size:15px;line-height:20px;color:#1f1f1f;font-weight:400;transform:scaleX(0.8333);">P</span>
<span class="t" style="left:1347.50px;top:250.17px;font-size:15px;line-height:20px;color:#1f1f1f;font-weight:400;transform:scaleX(1.0000);">Q</span>
<span class="t" style="left:1421.20px;top:250.17px;font-size:15px;line-height:20px;color:#1f1f1f;font-weight:400;transform:scaleX(0.8000);">R</span>
<span class="t" style="left:1476.75px;top:250.17px;font-size:15px;line-height:20px;color:#1f1f1f;font-weight:400;transform:scaleX(0.7000);">S</span>
<span class="t" style="left:1530.75px;top:250.17px;font-size:15px;line-height:20px;color:#1f1f1f;font-weight:400;transform:scaleX(0.8889);">T</span>
<span class="t" style="left:13.29px;top:306.17px;font-size:15px;line-height:20px;color:#1f1f1f;font-weight:400;transform:scaleX(0.7143);">1</span>
<span class="t" style="left:12.25px;top:347.67px;font-size:15px;line-height:20px;color:#1f1f1f;font-weight:400;transform:scaleX(1.0625);">2</span>
<span class="t" style="left:12.25px;top:393.17px;font-size:15px;line-height:20px;color:#1f1f1f;font-weight:400;transform:scaleX(1.0625);">5</span>
<span class="t" style="left:12.25px;top:461.17px;font-size:15px;line-height:20px;color:#1f1f1f;font-weight:400;transform:scaleX(1.0625);">6</span>
<span class="t" style="left:12.25px;top:504.17px;font-size:15px;line-height:20px;color:#1f1f1f;font-weight:400;transform:scaleX(1.0625);">8</span>
<span class="t" style="left:12.25px;top:572.17px;font-size:15px;line-height:20px;color:#1f1f1f;font-weight:400;transform:scaleX(1.0625);">9</span>
<span class="t" style="left:7.66px;top:615.17px;font-size:15px;line-height:20px;color:#1f1f1f;font-weight:400;transform:scaleX(1.0893);">11</span>
<span class="t" style="left:7.74px;top:682.67px;font-size:15px;line-height:20px;color:#1f1f1f;font-weight:400;transform:scaleX(1.0103);">12</span>
<span class="t" style="left:7.74px;top:725.17px;font-size:15px;line-height:20px;color:#1f1f1f;font-weight:400;transform:scaleX(1.0103);">14</span>
<span class="t" style="left:7.74px;top:793.17px;font-size:15px;line-height:20px;color:#1f1f1f;font-weight:400;transform:scaleX(1.0103);">15</span>
<span class="t" style="left:7.74px;top:814.17px;font-size:15px;line-height:20px;color:#1f1f1f;font-weight:400;transform:scaleX(1.0103);">16</span>
<span class="t" style="left:7.74px;top:835.67px;font-size:15px;line-height:20px;color:#1f1f1f;font-weight:400;transform:scaleX(1.0103);">17</span>
<span class="t" style="left:7.74px;top:856.67px;font-size:15px;line-height:20px;color:#1f1f1f;font-weight:400;transform:scaleX(1.0103);">18</span>
<div style="left:0px;top:366.5px;width:31px;height:6px;overflow:hidden;"><span class="t" style="left:12.25px;top:-11.83px;font-size:15px;line-height:20px;color:#1f1f1f;font-weight:400;transform:scaleX(1.0625);">3</span></div>
<div style="left:0px;top:373.5px;width:31px;height:5.5px;overflow:hidden;"><span class="t" style="left:12.25px;top:-12.33px;font-size:15px;line-height:20px;color:#1f1f1f;font-weight:400;transform:scaleX(1.0625);">4</span></div>
<div style="left:0px;top:481.0px;width:31px;height:8.0px;overflow:hidden;"><span class="t" style="left:12.25px;top:-9.83px;font-size:15px;line-height:20px;color:#1f1f1f;font-weight:400;transform:scaleX(1.0625);">7</span></div>
<div style="left:0px;top:591.5px;width:31px;height:8px;overflow:hidden;"><span class="t" style="left:7.74px;top:-9.83px;font-size:15px;line-height:20px;color:#1f1f1f;font-weight:400;transform:scaleX(1.0103);">10</span></div>
<div style="left:0px;top:702.5px;width:31px;height:7.5px;overflow:hidden;"><span class="t" style="left:7.74px;top:-10.33px;font-size:15px;line-height:20px;color:#1f1f1f;font-weight:400;transform:scaleX(1.0103);">13</span></div>
<span class="t" style="left:189.00px;top:289.16px;font-size:14px;line-height:18px;color:#000000;font-weight:700;transform:scaleX(0.8812);">CADASTRO</span>
<span class="t" style="left:302.50px;top:280.16px;font-size:14px;line-height:18px;color:#000000;font-weight:700;transform:scaleX(0.8758);">CONTROLE</span>
<span class="t" style="left:297.00px;top:298.66px;font-size:14px;line-height:18px;color:#000000;font-weight:700;transform:scaleX(0.8904);">HOSPITALAR</span>
<span class="t" style="left:409.00px;top:280.16px;font-size:14px;line-height:18px;color:#ffffff;font-weight:700;transform:scaleX(0.8984);">INDICADORES</span>
<span class="t" style="left:406.00px;top:298.66px;font-size:14px;line-height:18px;color:#ffffff;font-weight:700;transform:scaleX(0.8680);">HOSPITALARES</span>
<span class="t" style="left:531.00px;top:289.16px;font-size:14px;line-height:18px;color:#000000;font-weight:700;transform:scaleX(0.8967);">DASHBOARD</span>
<span class="t" style="left:646.00px;top:289.16px;font-size:14px;line-height:18px;color:#000000;font-weight:700;transform:scaleX(0.8748);">INSTRUÇÕES</span>
<span class="t" style="left:184.50px;top:342.16px;font-size:14px;line-height:18px;color:#ffffff;font-weight:700;transform:scaleX(0.8826);">PACIENTES</span>
<span class="t" style="left:343.50px;top:341.66px;font-size:14px;line-height:18px;color:#ffffff;font-weight:700;transform:scaleX(0.9122);">NUTRIÇÃO</span>
<span class="t" style="left:515.00px;top:342.16px;font-size:14px;line-height:18px;color:#ffffff;font-weight:700;transform:scaleX(0.9209);">LAVANDERIA</span>
<span class="t" style="left:681.00px;top:342.16px;font-size:14px;line-height:18px;color:#404040;font-weight:700;transform:scaleX(0.9300);">MEDICAMENTOS</span>
<span class="t" style="left:34.30px;top:364.67px;font-size:14.5px;line-height:19px;color:#000000;font-weight:700;transform:scaleX(1.1322);-webkit-text-stroke:1.4px #000;">SHEETS TECH</span>
<span class="t" style="left:83.00px;top:386.20px;font-size:17px;line-height:22px;color:#404040;font-weight:700;transform:scaleX(0.9724);">Gasto Total</span>
<span class="t" style="left:83.00px;top:496.70px;font-size:17px;line-height:22px;color:#404040;font-weight:700;transform:scaleX(0.9895);">Qtd de Medicamentos adquiridos</span>
<span class="t" style="left:82.00px;top:607.20px;font-size:17px;line-height:22px;color:#404040;font-weight:700;transform:scaleX(1.0009);">Média de edicamentos adquiridos/Dia</span>
<span class="t" style="left:83.00px;top:717.70px;font-size:17px;line-height:22px;color:#404040;font-weight:700;transform:scaleX(1.0067);">Gasto Médio de Medicamentos/Dia</span>
<span class="t" style="left:132.54px;top:422.96px;font-size:40px;line-height:52px;color:#404040;font-weight:700;transform:scaleX(0.9799);">R$ 218.739</span>
<span class="t" style="left:184.00px;top:533.46px;font-size:40px;line-height:52px;color:#404040;font-weight:700;transform:scaleX(0.9915);">4.548</span>
<span class="t" style="left:200.02px;top:644.46px;font-size:40px;line-height:52px;color:#404040;font-weight:700;transform:scaleX(0.9922);">147</span>
<span class="t" style="left:126.81px;top:755.46px;font-size:40px;line-height:52px;color:#404040;font-weight:700;transform:scaleX(0.9701);">R$ 1.083,21</span>
<span class="t" style="left:433.00px;top:386.70px;font-size:17px;line-height:22px;color:#404040;font-weight:700;transform:scaleX(0.9895);">Gasto Total (R$)</span>
<span class="t" style="left:440.23px;top:489.32px;font-size:12px;line-height:16px;color:#1e1e1e;font-weight:400;transform:scaleX(0.9092);">5.621</span>
<span class="t" style="left:451.73px;top:566.84px;font-size:12px;line-height:16px;color:#595959;font-weight:400;transform:scaleX(0.6571);">1</span>
<span class="t" style="left:474.30px;top:518.19px;font-size:12px;line-height:16px;color:#1e1e1e;font-weight:400;transform:scaleX(0.9092);">2.238</span>
<span class="t" style="left:484.85px;top:566.84px;font-size:12px;line-height:16px;color:#595959;font-weight:400;transform:scaleX(0.9286);">2</span>
<span class="t" style="left:505.26px;top:421.44px;font-size:12px;line-height:16px;color:#1e1e1e;font-weight:400;transform:scaleX(0.9128);">13.576</span>
<span class="t" style="left:518.91px;top:566.84px;font-size:12px;line-height:16px;color:#595959;font-weight:400;transform:scaleX(0.9286);">3</span>
<span class="t" style="left:542.43px;top:494.04px;font-size:12px;line-height:16px;color:#1e1e1e;font-weight:400;transform:scaleX(0.9092);">5.068</span>
<span class="t" style="left:552.98px;top:566.84px;font-size:12px;line-height:16px;color:#595959;font-weight:400;transform:scaleX(0.9286);">4</span>
<span class="t" style="left:576.49px;top:494.48px;font-size:12px;line-height:16px;color:#1e1e1e;font-weight:400;transform:scaleX(0.9092);">5.017</span>
<span class="t" style="left:587.04px;top:566.84px;font-size:12px;line-height:16px;color:#595959;font-weight:400;transform:scaleX(0.9286);">5</span>
<span class="t" style="left:610.55px;top:490.30px;font-size:12px;line-height:16px;color:#1e1e1e;font-weight:400;transform:scaleX(0.9092);">5.506</span>
<span class="t" style="left:621.10px;top:566.84px;font-size:12px;line-height:16px;color:#595959;font-weight:400;transform:scaleX(0.9286);">6</span>
<span class="t" style="left:644.62px;top:497.68px;font-size:12px;line-height:16px;color:#1e1e1e;font-weight:400;transform:scaleX(0.9092);">4.642</span>
<span class="t" style="left:655.17px;top:566.84px;font-size:12px;line-height:16px;color:#595959;font-weight:400;transform:scaleX(0.9286);">7</span>
<span class="t" style="left:678.68px;top:463.41px;font-size:12px;line-height:16px;color:#1e1e1e;font-weight:400;transform:scaleX(0.9092);">8.658</span>
<span class="t" style="left:689.23px;top:566.84px;font-size:12px;line-height:16px;color:#595959;font-weight:400;transform:scaleX(0.9286);">8</span>
<span class="t" style="left:712.75px;top:496.32px;font-size:12px;line-height:16px;color:#1e1e1e;font-weight:400;transform:scaleX(0.9092);">4.801</span>
<span class="t" style="left:723.30px;top:566.84px;font-size:12px;line-height:16px;color:#595959;font-weight:400;transform:scaleX(0.9286);">9</span>
<span class="t" style="left:746.81px;top:497.32px;font-size:12px;line-height:16px;color:#1e1e1e;font-weight:400;transform:scaleX(0.9092);">4.684</span>
<span class="t" style="left:754.31px;top:566.84px;font-size:12px;line-height:16px;color:#595959;font-weight:400;transform:scaleX(0.9215);">10</span>
<span class="t" style="left:780.88px;top:489.36px;font-size:12px;line-height:16px;color:#1e1e1e;font-weight:400;transform:scaleX(0.9092);">5.616</span>
<span class="t" style="left:788.38px;top:566.84px;font-size:12px;line-height:16px;color:#595959;font-weight:400;transform:scaleX(0.9857);">11</span>
<span class="t" style="left:814.94px;top:504.25px;font-size:12px;line-height:16px;color:#1e1e1e;font-weight:400;transform:scaleX(0.9092);">3.872</span>
<span class="t" style="left:822.44px;top:566.84px;font-size:12px;line-height:16px;color:#595959;font-weight:400;transform:scaleX(0.9215);">12</span>
<span class="t" style="left:845.91px;top:447.32px;font-size:12px;line-height:16px;color:#1e1e1e;font-weight:400;transform:scaleX(0.9128);">10.543</span>
<span class="t" style="left:856.51px;top:566.84px;font-size:12px;line-height:16px;color:#595959;font-weight:400;transform:scaleX(0.9215);">13</span>
<span class="t" style="left:883.07px;top:477.85px;font-size:12px;line-height:16px;color:#1e1e1e;font-weight:400;transform:scaleX(0.9092);">6.965</span>
<span class="t" style="left:890.57px;top:566.84px;font-size:12px;line-height:16px;color:#595959;font-weight:400;transform:scaleX(0.9215);">14</span>
<span class="t" style="left:917.14px;top:471.39px;font-size:12px;line-height:16px;color:#1e1e1e;font-weight:400;transform:scaleX(0.9092);">7.722</span>
<span class="t" style="left:924.64px;top:566.84px;font-size:12px;line-height:16px;color:#595959;font-weight:400;transform:scaleX(0.9215);">15</span>
<span class="t" style="left:951.20px;top:458.73px;font-size:12px;line-height:16px;color:#1e1e1e;font-weight:400;transform:scaleX(0.9092);">9.206</span>
<span class="t" style="left:958.70px;top:566.84px;font-size:12px;line-height:16px;color:#595959;font-weight:400;transform:scaleX(0.9215);">16</span>
<span class="t" style="left:985.26px;top:476.56px;font-size:12px;line-height:16px;color:#1e1e1e;font-weight:400;transform:scaleX(0.9367);">7.117</span>
<span class="t" style="left:992.76px;top:566.84px;font-size:12px;line-height:16px;color:#595959;font-weight:400;transform:scaleX(0.9215);">17</span>
<span class="t" style="left:1019.33px;top:473.70px;font-size:12px;line-height:16px;color:#1e1e1e;font-weight:400;transform:scaleX(0.9092);">7.452</span>
<span class="t" style="left:1026.83px;top:566.84px;font-size:12px;line-height:16px;color:#595959;font-weight:400;transform:scaleX(0.9215);">18</span>
<span class="t" style="left:1053.39px;top:461.84px;font-size:12px;line-height:16px;color:#1e1e1e;font-weight:400;transform:scaleX(0.9092);">8.842</span>
<span class="t" style="left:1060.89px;top:566.84px;font-size:12px;line-height:16px;color:#595959;font-weight:400;transform:scaleX(0.9215);">19</span>
<span class="t" style="left:1084.36px;top:451.72px;font-size:12px;line-height:16px;color:#1e1e1e;font-weight:400;transform:scaleX(0.9128);">10.028</span>
<span class="t" style="left:1094.96px;top:566.84px;font-size:12px;line-height:16px;color:#595959;font-weight:400;transform:scaleX(0.9215);">20</span>
<span class="t" style="left:1121.52px;top:485.08px;font-size:12px;line-height:16px;color:#1e1e1e;font-weight:400;transform:scaleX(0.9367);">6.118</span>
<span class="t" style="left:1129.02px;top:566.84px;font-size:12px;line-height:16px;color:#595959;font-weight:400;transform:scaleX(0.9215);">21</span>
<span class="t" style="left:1155.59px;top:486.56px;font-size:12px;line-height:16px;color:#1e1e1e;font-weight:400;transform:scaleX(0.9092);">5.945</span>
<span class="t" style="left:1163.09px;top:566.84px;font-size:12px;line-height:16px;color:#595959;font-weight:400;transform:scaleX(0.9215);">22</span>
<span class="t" style="left:1186.55px;top:421.33px;font-size:12px;line-height:16px;color:#1e1e1e;font-weight:400;transform:scaleX(0.9128);">13.589</span>
<span class="t" style="left:1197.15px;top:566.84px;font-size:12px;line-height:16px;color:#595959;font-weight:400;transform:scaleX(0.9215);">23</span>
<span class="t" style="left:1223.72px;top:474.03px;font-size:12px;line-height:16px;color:#1e1e1e;font-weight:400;transform:scaleX(0.9092);">7.413</span>
<span class="t" style="left:1231.22px;top:566.84px;font-size:12px;line-height:16px;color:#595959;font-weight:400;transform:scaleX(0.9215);">24</span>
<span class="t" style="left:1257.78px;top:489.21px;font-size:12px;line-height:16px;color:#1e1e1e;font-weight:400;transform:scaleX(0.9092);">5.634</span>
<span class="t" style="left:1265.28px;top:566.84px;font-size:12px;line-height:16px;color:#595959;font-weight:400;transform:scaleX(0.9215);">25</span>
<span class="t" style="left:1291.85px;top:489.68px;font-size:12px;line-height:16px;color:#1e1e1e;font-weight:400;transform:scaleX(0.9092);">5.579</span>
<span class="t" style="left:1299.35px;top:566.84px;font-size:12px;line-height:16px;color:#595959;font-weight:400;transform:scaleX(0.9215);">26</span>
<span class="t" style="left:1322.81px;top:426.20px;font-size:12px;line-height:16px;color:#1e1e1e;font-weight:400;transform:scaleX(0.9128);">13.018</span>
<span class="t" style="left:1333.41px;top:566.84px;font-size:12px;line-height:16px;color:#595959;font-weight:400;transform:scaleX(0.9215);">27</span>
<span class="t" style="left:1359.97px;top:480.35px;font-size:12px;line-height:16px;color:#1e1e1e;font-weight:400;transform:scaleX(0.9092);">6.673</span>
<span class="t" style="left:1367.47px;top:566.84px;font-size:12px;line-height:16px;color:#595959;font-weight:400;transform:scaleX(0.9215);">28</span>
<span class="t" style="left:1394.04px;top:487.63px;font-size:12px;line-height:16px;color:#1e1e1e;font-weight:400;transform:scaleX(0.9092);">5.819</span>
<span class="t" style="left:1401.54px;top:566.84px;font-size:12px;line-height:16px;color:#595959;font-weight:400;transform:scaleX(0.9215);">29</span>
<span class="t" style="left:1428.10px;top:480.24px;font-size:12px;line-height:16px;color:#1e1e1e;font-weight:400;transform:scaleX(0.9092);">6.685</span>
<span class="t" style="left:1435.60px;top:566.84px;font-size:12px;line-height:16px;color:#595959;font-weight:400;transform:scaleX(0.9215);">30</span>
<span class="t" style="left:1462.17px;top:493.84px;font-size:12px;line-height:16px;color:#1e1e1e;font-weight:400;transform:scaleX(0.9092);">5.091</span>
<span class="t" style="left:1469.67px;top:566.84px;font-size:12px;line-height:16px;color:#595959;font-weight:400;transform:scaleX(0.9215);">31</span>
<span class="t" style="left:433.00px;top:607.50px;font-size:17px;line-height:22px;color:#333333;font-weight:700;transform:scaleX(1.0007);">Top 10 Medicamentos mais</span>
<span class="t" style="left:678.75px;top:608.13px;font-size:11px;line-height:14px;color:#111;font-weight:400;transform:scaleX(0.9048);">Caros</span>
<span class="t" style="left:458.00px;top:660.40px;font-size:13px;line-height:17px;color:#404040;font-weight:400;transform:scaleX(0.9705);">parecoxibe</span>
<span class="t" style="left:565.75px;top:672.65px;font-size:13px;line-height:17px;color:#404040;font-weight:400;transform:scaleX(1.0138);">olodaterol</span>
<span class="t" style="left:674.00px;top:685.65px;font-size:13px;line-height:17px;color:#404040;font-weight:400;transform:scaleX(1.0326);">nilotinibe</span>
<span class="t" style="left:780.50px;top:698.15px;font-size:13px;line-height:17px;color:#404040;font-weight:400;transform:scaleX(0.9463);">meclizina</span>
<span class="t" style="left:890.50px;top:702.45px;font-size:13px;line-height:17px;color:#404040;font-weight:400;transform:scaleX(1.0182);">ramipril</span>
<span class="t" style="left:983.75px;top:710.65px;font-size:13px;line-height:17px;color:#404040;font-weight:400;transform:scaleX(0.9691);">mebendazol</span>
<span class="t" style="left:1088.75px;top:714.45px;font-size:13px;line-height:17px;color:#404040;font-weight:400;transform:scaleX(0.9805);">paracetamol</span>
<span class="t" style="left:1194.25px;top:721.45px;font-size:13px;line-height:17px;color:#404040;font-weight:400;transform:scaleX(0.9783);">latanoprosta</span>
<span class="t" style="left:1300.75px;top:725.65px;font-size:13px;line-height:17px;color:#404040;font-weight:400;transform:scaleX(0.9577);">olmesartana</span>
<span class="t" style="left:1409.50px;top:733.45px;font-size:13px;line-height:17px;color:#404040;font-weight:400;transform:scaleX(0.9906);">lamotrigina</span>
<span class="t" style="left:15.00px;top:919.64px;font-size:12px;line-height:16px;color:#444;font-weight:400;transform:scaleX(0.9809);">Pronto</span>
<span class="t" style="left:131.00px;top:920.14px;font-size:12px;line-height:16px;color:#1f1f1f;font-weight:700;transform:scaleX(0.9738);">Acessibilidade: investigar</span>
<span class="t" style="left:1553.00px;top:919.64px;font-size:12px;line-height:16px;color:#444;font-weight:400;transform:scaleX(0.9036);">90%</span>
</div></body></html>
